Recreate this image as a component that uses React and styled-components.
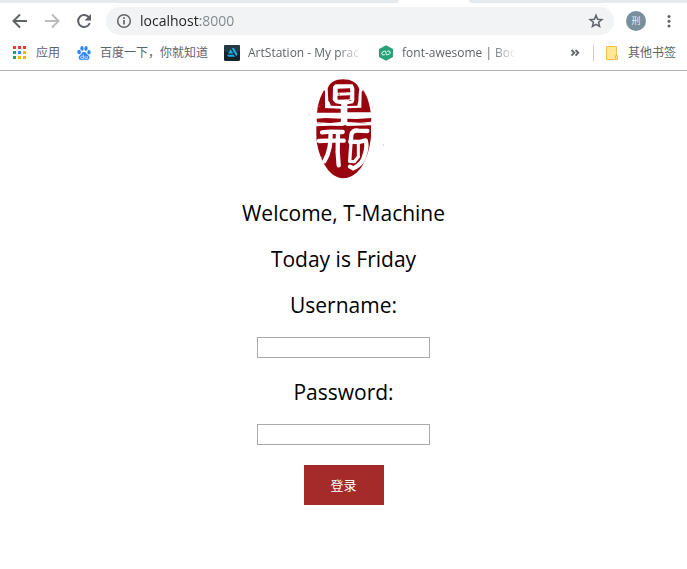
import React from "react";
import styled, { createGlobalStyle } from "styled-components";

const GlobalStyle = createGlobalStyle`
  *, *::before, *::after { box-sizing: border-box; }
  body {
    margin: 0;
    background: #fff;
    color: #000;
    font-family: "Open Sans", "Noto Sans CJK SC", sans-serif;
  }
  button, input { font-family: inherit; }
`;

const Browser = styled.header`
  border-bottom: 1px solid #b3b4b6;
`;

const TabStrip = styled.div`
  display: flex;
  height: 3px;
  background: #fff;
`;

const TabEdge = styled.div`
  flex: ${(p) => p.$grow} 1 0;
  background: #e7eaed;
  border-radius: ${(p) => (p.$side === "left" ? "0 0 4px 0" : "0 0 0 4px")};
`;

const ActiveTab = styled.div`
  flex: 70 1 0;
`;

const Toolbar = styled.div`
  display: flex;
  align-items: center;
  height: 36px;
  padding: 0 10px 0 12px;
`;

const IconButton = styled.button`
  display: flex;
  align-items: center;
  justify-content: center;
  flex: none;
  width: 16px;
  height: 16px;
  padding: 0;
  border: 0;
  background: none;
  color: ${(p) => (p.$faded ? "#babcbe" : "#5f6368")};
`;

const Navigation = styled.nav`
  display: flex;
  gap: 16px;
  margin-right: 14px;
`;

const AddressBar = styled.div`
  display: flex;
  flex: 1;
  align-items: center;
  gap: 8px;
  min-width: 0;
  height: 28px;
  padding: 0 10px;
  border-radius: 14px;
  background: #f1f3f4;
`;

const AddressInput = styled.input`
  flex: 1;
  min-width: 0;
  height: 24px;
  padding: 0;
  border: 0;
  outline: 0;
  font-size: 14px;
  line-height: 24px;
  background: linear-gradient(to right, #202124 60px, #80868b 60px);
  background-clip: text;
  -webkit-background-clip: text;
  color: transparent;
  caret-color: #202124;
`;

const Avatar = styled.button`
  flex: none;
  width: 20px;
  height: 20px;
  margin: 0 15px 0 12px;
  padding: 0;
  border: 0;
  border-radius: 50%;
  background: #78909c;
  color: #e4eaed;
  font-size: 9px;
  line-height: 20px;
`;

const Bookmarks = styled.nav`
  display: flex;
  align-items: center;
  height: 31px;
  padding: 0 11px 3px 12px;
  font-size: 12px;
  line-height: 20px;
`;

const Bookmark = styled.a`
  display: flex;
  flex: none;
  align-items: center;
  gap: 8px;
  margin-right: ${(p) => p.$after || 0}px;
  color: #5f6368;
  text-decoration: none;
  white-space: nowrap;
`;

const BookmarkTitle = styled.span`
  width: 114px;
  overflow: hidden;
  mask-image: linear-gradient(to left, transparent, #000 24px);
`;

const Spacer = styled.div`
  flex: 1;
`;

const Divider = styled.div`
  width: 1px;
  height: 16px;
  margin: 0 10px;
  background: #cdd0d3;
`;

const Page = styled.main`
  display: flex;
  flex-direction: column;
  align-items: center;
  padding-top: 1px;
  font-size: 21px;
  line-height: 28px;
`;

const Greeting = styled.p`
  margin: 0 0 18px;
`;

const LoginForm = styled.form`
  display: flex;
  flex-direction: column;
  align-items: center;
  gap: 20px;
`;

const Field = styled.div`
  display: flex;
  flex-direction: column;
  align-items: center;
  gap: 18px;
`;

const TextInput = styled.input`
  width: 173px;
  height: 21px;
  padding: 1px 2px;
  border: 1px solid #a9a9a9;
  border-radius: 0;
  background: #fff;
  font-size: 13px;
`;

const SubmitButton = styled.button`
  width: 80px;
  height: 40px;
  padding: 0;
  border: 0;
  background: #a52a2a;
  color: #fff;
  font-size: 13px;
  line-height: 20px;
`;

const ArrowIcon = ({ forward }) => (
  <svg width="16" height="16" viewBox="0 0 16 16" fill="none" stroke="currentColor" strokeWidth="2">
    <path d={forward ? "M1 8h13M8 1.5 14.5 8 8 14.5" : "M15 8H2M8 1.5 1.5 8 8 14.5"} />
  </svg>
);

const ReloadIcon = () => (
  <svg width="16" height="16" viewBox="0 0 16 16">
    <path d="M13.2 4.8A6 6 0 1 0 13.8 10" fill="none" stroke="currentColor" strokeWidth="2" />
    <path d="M15 1v6.5H8.5z" fill="currentColor" />
  </svg>
);

const InfoIcon = () => (
  <svg width="16" height="16" viewBox="0 0 16 16" fill="none" stroke="currentColor">
    <circle cx="8" cy="8" r="6.3" strokeWidth="1.5" />
    <path d="M8 7v4.5M8 4.2v1.7" strokeWidth="1.7" />
  </svg>
);

const StarIcon = () => (
  <svg width="16" height="16" viewBox="0 0 16 16" fill="none" stroke="currentColor" strokeWidth="1.5">
    <path d="m8 2.3 1.6 3.9 4.3.3-3.3 2.8 1 4.2L8 11.3l-3.6 2.2 1-4.2-3.3-2.8 4.3-.3z" />
  </svg>
);

const MenuIcon = () => (
  <svg width="16" height="16" viewBox="0 0 16 16" fill="currentColor">
    <circle cx="8" cy="3.5" r="1.5" />
    <circle cx="8" cy="8.3" r="1.5" />
    <circle cx="8" cy="13.1" r="1.5" />
  </svg>
);

const APP_COLOURS = [
  ["#f13a30", "#f13a30", "#f13a30"],
  ["#22a06b", "#2a8cff", "#fbb300"],
  ["#22a06b", "#fbb300", "#fbb300"],
];

const AppsIcon = () => (
  <svg width="16" height="16" viewBox="0 0 16 16">
    {APP_COLOURS.map((row, y) =>
      row.map((fill, x) => (
        <rect key={`${x}${y}`} x={1 + x * 5} y={1 + y * 5} width="3" height="3" fill={fill} />
      ))
    )}
  </svg>
);

const PawIcon = () => (
  <svg width="16" height="16" viewBox="0 0 16 16" fill="#3388ff">
    <ellipse cx="3.1" cy="7" rx="1.8" ry="2.3" transform="rotate(-10 3.1 7)" />
    <ellipse cx="6" cy="3.4" rx="1.7" ry="2.4" />
    <ellipse cx="10" cy="3.5" rx="1.7" ry="2.4" transform="rotate(12 10 3.5)" />
    <ellipse cx="13" cy="7.2" rx="1.7" ry="2.2" />
    <path d="M8 6.7c1.5 0 2 1.4 3.2 2.6 1.2 1.1 2.6 2 2.2 3.8-.4 1.9-2 2-3.1 1.8-1.6-.3-2.9-.3-4.5 0-1.1.2-2.8 0-3.1-1.8-.3-1.8 1.1-2.7 2.2-3.8C6 8.1 6.5 6.7 8 6.7z" />
    <path d="M7.4 9.7v4H5.9a1.2 1.2 0 0 1 0-2.6h1.5M9 11v1.8q0 .9 1 .9h1.2V11" fill="none" stroke="#e6f1ff" strokeWidth=".8" />
  </svg>
);

const ArtStationIcon = () => (
  <svg width="16" height="16" viewBox="0 0 16 16">
    <rect width="16" height="16" rx="1.5" fill="#17232b" />
    <path d="M1.5 0h13A1.5 1.5 0 0 1 16 1.5V6L8 9 0 6V1.5A1.5 1.5 0 0 1 1.5 0z" fill="#243b45" />
    <path d="M6.6 4.2 4.2 8.6h4.9z M3 9.7h6.8l1.2 2H4.8q-.7 0-1-.6z M7.7 3h1.7q.5 0 .8.5l3 5.3q.3.6 0 1l-1 1.5z" fill="#13aff0" />
  </svg>
);

const HexagonIcon = () => (
  <svg width="16" height="16" viewBox="0 0 16 16">
    <path d="m8 .2 7 3.9v7.8l-7 3.9-7-3.9V4.1z" fill="#29a177" />
    <path
      d="M6.8 9.6 6 9.9A1.6 1.6 0 0 1 4.8 6.9L6.6 6.2Q8 5.8 8 7.2V8.8Q8 10.2 9.4 9.8L11.2 9.1A1.6 1.6 0 0 0 10 6.1L9.2 6.4"
      fill="none"
      stroke="#f0fff8"
      strokeWidth="1"
    />
  </svg>
);

const ChevronsIcon = () => (
  <svg width="16" height="16" viewBox="0 0 16 16" fill="none" stroke="currentColor" strokeWidth="1.8">
    <path d="m4.5 5 2.8 2.8-2.8 2.8M8.5 5l2.8 2.8-2.8 2.8" />
  </svg>
);

const FolderIcon = () => (
  <svg width="16" height="16" viewBox="0 0 16 16" fill="#ffe795" stroke="#edc34a">
    <path d="M2.5 1.5h10v13h-10z" />
    <path d="M11.5 10.5h2v4h-2z" />
  </svg>
);

const Seal = () => (
  <svg width="90" height="127" viewBox="-4 0 270 381" role="img" aria-label="Seal">
    <g fill="#98050f">
      <path d="M82 50C88 30 106 22 128 22C152 22 172 32 177 52L175 66L174 88L162 88V48L157 37L105 37L98 44L97 88L84 88Z" />
      <path d="M71 55 74 57 74 108 121 110 121 122 50 122 52 106C56 86 63 68 71 55Z" />
      <path d="M188 54C200 70 207 92 211 121L141 121V109L183 107L184 60Z" />
      <path d="M112 50 149 49 150 61 112 62Z" />
      <path d="M111 71 149 70 148 82 112 83Z" />
      <path d="M97 84 106 94 123 97 122 102 92 101 86 88Z M174 86 171 101 141 102 141 97 158 94 162 86Z" />
      <path d="M49 140 76 138 122 140 121 150 90 153 50 151Z" />
      <path d="M141 140 168 141 213 138 212 149 180 152 141 150Z" />
      <path d="M48 163 90 161 126 162 135 159 140 162 212 160 212 193C209 230 198 263 181 289C165 309 148 319 127 319C107 317 91 306 79 288C60 259 49 225 48 191Z" />
    </g>
    <g fill="none" stroke="#fff" strokeWidth="13" strokeLinejoin="round" strokeLinecap="round">
      <path d="M65 181 90 179 127 180" />
      <path d="M56 207 88 206 130 206" />
      <path d="M91 182C90 211 90 239 72 268" />
      <path d="M113 182 112 240 115 280" />
      <path d="M201 177 174 176Q155 173 153 190L151 210" />
      <path d="M150 209 176 210 196 205Q201 222 195 242L190 258Q183 278 159 289L149 284" />
      <path d="M152 211 148 268 162 269 174 254" strokeWidth="10" />
      <path d="M174 212 174 252" strokeWidth="9" />
    </g>
    <g stroke="#d9898f" strokeWidth="2" fill="none">
      <path d="M55 106 59 101 M188 58 191 61 M51 154 65 153 M182 154 197 153 M62 253 65 258 M88 299 94 306 M174 297 181 290" />
      <path d="M113 66 119 67 M146 85 153 85" stroke="#7f030b" />
    </g>
    <g fill="#efb4ba">
      <circle cx="25" cy="128" r="2" />
      <circle cx="18" cy="173" r="1.5" />
      <circle cx="36" cy="111" r="1.5" />
      <circle cx="217" cy="105" r="2" />
      <circle cx="246" cy="156" r="1.5" />
      <circle cx="249" cy="219" r="2" />
    </g>
  </svg>
);

export default function App() {
  return (
    <>
      <GlobalStyle />
      <Browser>
        <TabStrip>
          <TabEdge $grow={399} $side="left" />
          <ActiveTab />
          <TabEdge $grow={218} $side="right" />
        </TabStrip>
        <Toolbar>
          <Navigation aria-label="Browser">
            <IconButton aria-label="Back"><ArrowIcon /></IconButton>
            <IconButton aria-label="Forward" $faded><ArrowIcon forward /></IconButton>
            <IconButton aria-label="Reload"><ReloadIcon /></IconButton>
          </Navigation>
          <AddressBar>
            <IconButton aria-label="Site information"><InfoIcon /></IconButton>
            <AddressInput aria-label="Address" defaultValue="localhost:8000" spellCheck={false} />
            <IconButton aria-label="Bookmark this page"><StarIcon /></IconButton>
          </AddressBar>
          <Avatar aria-label="Profile">刑</Avatar>
          <IconButton aria-label="Menu"><MenuIcon /></IconButton>
        </Toolbar>
        <Bookmarks aria-label="Bookmarks">
          <Bookmark href="#apps" $after={16}><AppsIcon />应用</Bookmark>
          <Bookmark href="#baidu" $after={16}><PawIcon />百度一下，你就知道</Bookmark>
          <Bookmark href="#artstation" $after={16}>
            <ArtStationIcon />
            <BookmarkTitle>ArtStation - My prac</BookmarkTitle>
          </Bookmark>
          <Bookmark href="#font-awesome">
            <HexagonIcon />
            <BookmarkTitle>font-awesome | Boo</BookmarkTitle>
          </Bookmark>
          <Spacer />
          <IconButton aria-label="More bookmarks"><ChevronsIcon /></IconButton>
          <Divider />
          <Bookmark href="#other"><FolderIcon />其他书签</Bookmark>
        </Bookmarks>
      </Browser>
      <Page>
        <Seal />
        <Greeting>Welcome, T-Machine</Greeting>
        <Greeting>Today is Friday</Greeting>
        <LoginForm onSubmit={(e) => e.preventDefault()}>
          <Field>
            <label htmlFor="username">Username:</label>
            <TextInput id="username" type="text" />
          </Field>
          <Field>
            <label htmlFor="password">Password:</label>
            <TextInput id="password" type="password" />
          </Field>
          <SubmitButton type="submit">登录</SubmitButton>
        </LoginForm>
      </Page>
    </>
  );
}
